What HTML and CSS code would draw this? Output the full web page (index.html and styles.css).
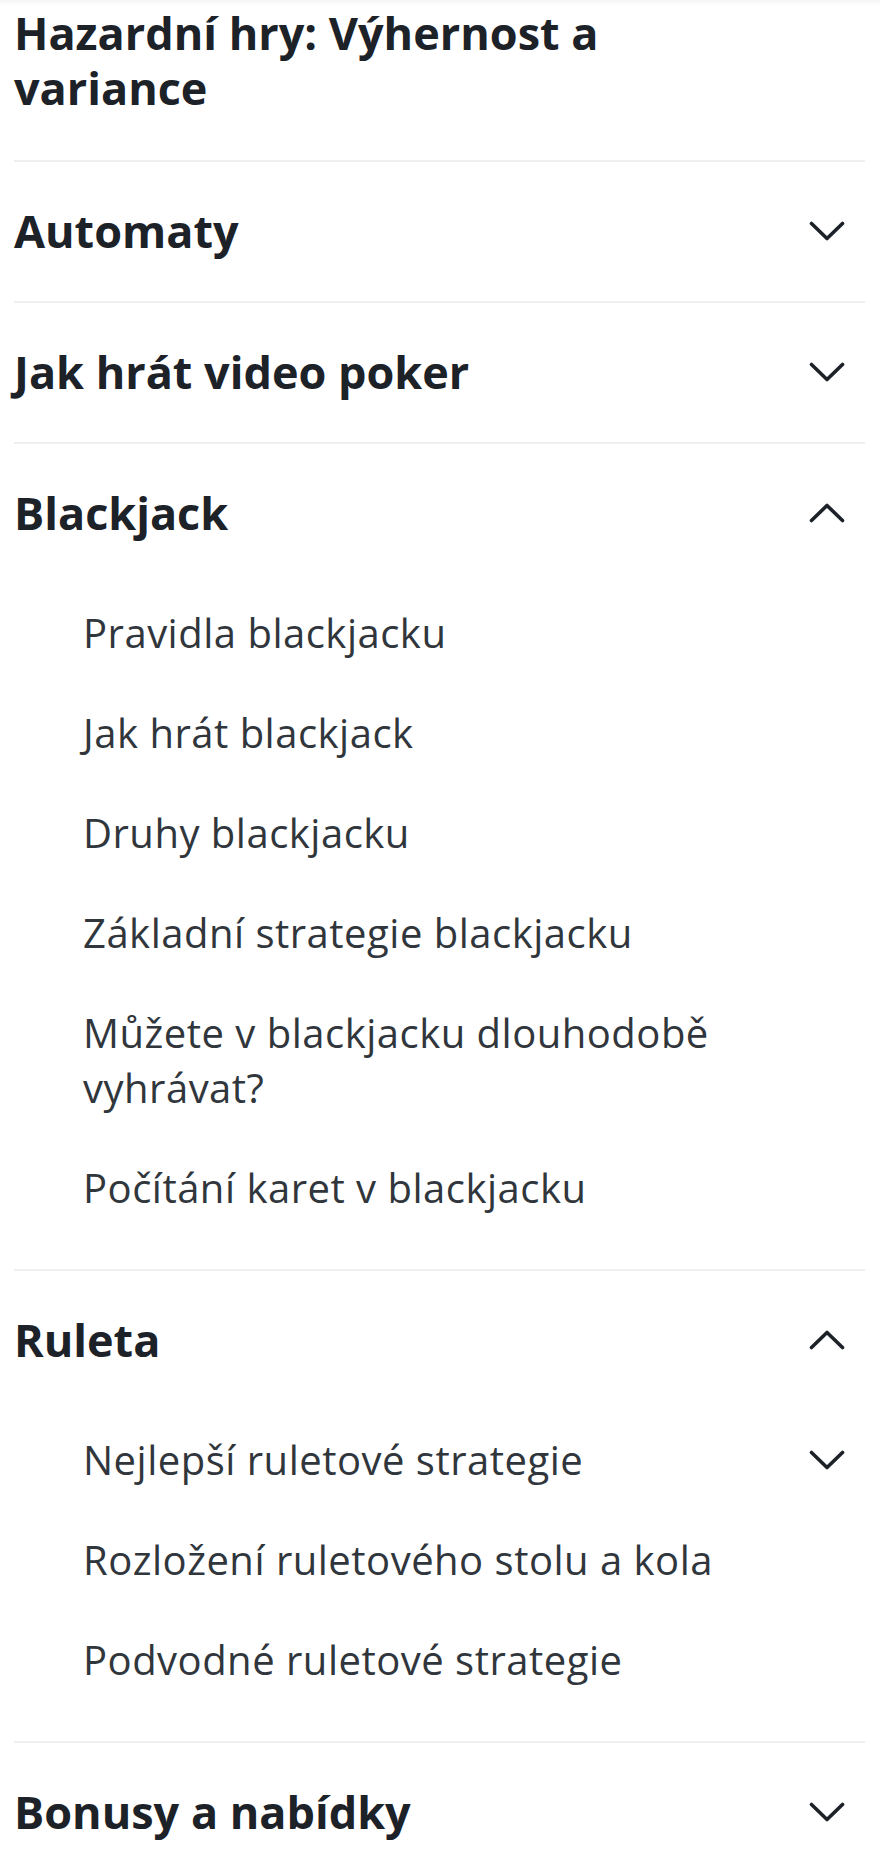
FILE: index.html
```html
<!DOCTYPE html>
<html>
<head>
<meta charset="UTF-8">
<title>Hazardní hry: Výhernost a variance</title>
<link rel="stylesheet" href="styles.css">
</head>
<body>

<div class="menu">
   <h2 class="menu-title">Hazardní hry: Výhernost a variance</h2>

   <div class="group">
      <div class="group-head">
         <span>Automaty</span>
         <svg class="chev" viewBox="0 0 36 20"><polyline points="2.5,2.5 18,17.5 33.5,2.5"/></svg>
      </div>
   </div>

   <div class="group">
      <div class="group-head">
         <span>Jak hrát video poker</span>
         <svg class="chev" viewBox="0 0 36 20"><polyline points="2.5,2.5 18,17.5 33.5,2.5"/></svg>
      </div>
   </div>

   <div class="group open">
      <div class="group-head">
         <span>Blackjack</span>
         <svg class="chev" viewBox="0 0 36 20"><polyline points="2.5,2.5 18,17.5 33.5,2.5"/></svg>
      </div>
      <ul class="sub">
         <li><span>Pravidla blackjacku</span></li>
         <li><span>Jak hrát blackjack</span></li>
         <li><span>Druhy blackjacku</span></li>
         <li><span>Základní strategie blackjacku</span></li>
         <li><span>Můžete v blackjacku dlouhodobě vyhrávat?</span></li>
         <li><span>Počítání karet v blackjacku</span></li>
      </ul>
   </div>

   <div class="group open">
      <div class="group-head">
         <span>Ruleta</span>
         <svg class="chev" viewBox="0 0 36 20"><polyline points="2.5,2.5 18,17.5 33.5,2.5"/></svg>
      </div>
      <ul class="sub">
         <li>
            <span>Nejlepší ruletové strategie</span>
            <svg class="chev" viewBox="0 0 36 20"><polyline points="2.5,2.5 18,17.5 33.5,2.5"/></svg>
         </li>
         <li><span>Rozložení ruletového stolu a kola</span></li>
         <li><span>Podvodné ruletové strategie</span></li>
      </ul>
   </div>

   <div class="group">
      <div class="group-head">
         <span>Bonusy a nabídky</span>
         <svg class="chev" viewBox="0 0 36 20"><polyline points="2.5,2.5 18,17.5 33.5,2.5"/></svg>
      </div>
   </div>
</div>

<script>
var heads = document.getElementsByClassName("group-head");
for (var i = 0; i < heads.length; i++) {
   heads[i].addEventListener("click", function() {
      this.parentNode.classList.toggle("open");
   });
}
</script>

</body>
</html>
```

FILE: styles.css
```css
body {
   margin: 0;
   background: #fff;
   font-family: "Open Sans", "Noto Sans", sans-serif;
   color: #1c2228;
}

.menu {
   padding: 5px 15px 0 14px;
   box-shadow: inset 0 5px 5px -3px rgba(0, 0, 0, 0.05);
}

.menu-title {
   margin: 0;
   padding-bottom: 45px;
   max-width: 700px;
   font-size: 45px;
   line-height: 55px;
   font-weight: 700;
}

.group {
   border-top: 2px solid #efefef;
}

.group-head {
   display: flex;
   align-items: center;
   justify-content: space-between;
   padding: 41px 20px 43px 0;
   font-size: 45px;
   line-height: 55px;
   font-weight: 700;
   cursor: pointer;
}

.chev {
   flex: none;
   width: 36px;
   height: 20px;
   fill: none;
   stroke: #1c2228;
   stroke-width: 3.6;
   stroke-linecap: round;
   stroke-linejoin: round;
}

.group.open > .group-head .chev {
   transform: rotate(180deg);
}

.sub {
   display: none;
   list-style: none;
   margin: 0;
   padding: 0 0 31px 0;
}

.group.open .sub {
   display: block;
}

.sub li {
   display: flex;
   align-items: center;
   justify-content: space-between;
   padding: 22px 20px 23px 69px;
   font-size: 40px;
   line-height: 55px;
   letter-spacing: 0.5px;
   color: #30363c;
}

.sub li span {
   max-width: 680px;
}
```
